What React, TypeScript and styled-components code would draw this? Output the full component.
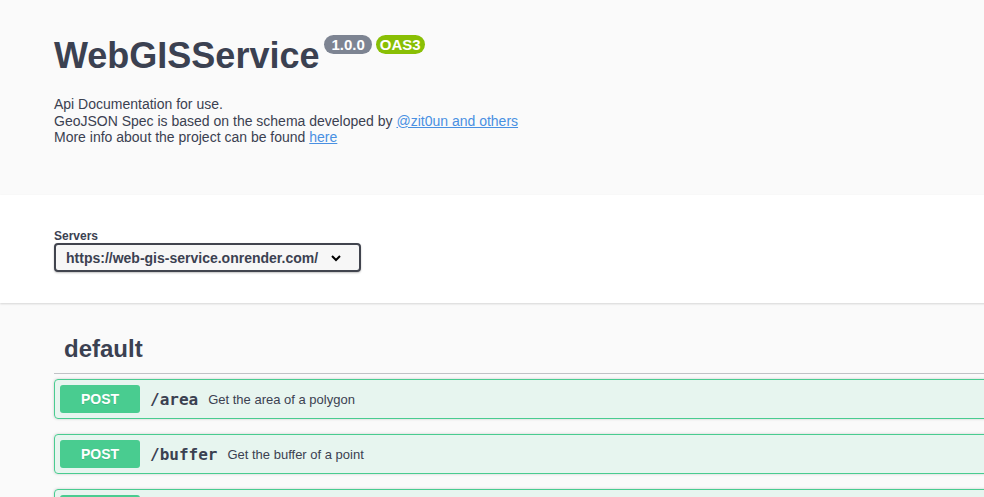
import React from "react";
import styled, { createGlobalStyle } from "styled-components";

const Global = createGlobalStyle`
  html, body { margin: 0; padding: 0; background: #fafafa; overflow: hidden; }
  body { font-family: "Liberation Sans", Arial, sans-serif; color: #3b4151; }
`;

const Page = styled.div`
  width: 1200px;
  min-height: 497px;
  background: #fafafa;
`;

const InfoSection = styled.section`
  background: #fafafa;
  padding: 35px 0 0 54px;
  height: 195px;
  box-sizing: border-box;
`;

const TitleRow = styled.div`
  display: flex;
  align-items: flex-start;
  gap: 4px;
`;

const Title = styled.h2`
  margin: 0;
  font-size: 36px;
  font-weight: 700;
  color: #3b4151;
  line-height: 41px;
  margin-right: 1px;
`;

const Badge = styled.span<{ $bg: string; $px: number }>`
  display: inline-block;
  background: ${(p) => p.$bg};
  color: #fff;
  font-size: 15px;
  font-weight: 700;
  line-height: 17px;
  padding: 1px ${(p) => p.$px}px;
  border-radius: 57px;
`;

const Description = styled.div`
  margin-top: 20px;
  font-size: 14px;
  line-height: 16.5px;
  color: #3b4151;
  p { margin: 0; }
`;

const Link = styled.a`
  color: #4990e2;
  text-decoration: underline;
`;

const SchemeContainer = styled.section`
  background: #fff;
  height: 108px;
  box-sizing: border-box;
  padding: 34px 0 0 54px;
  box-shadow: 0 1px 2px 0 rgba(0, 0, 0, 0.15);
  position: relative;
`;

const Label = styled.div`
  font-size: 12px;
  font-weight: 700;
  color: #3b4151;
  line-height: 14px;
  margin-bottom: 0;
`;

const Select = styled.div`
  display: inline-flex;
  align-items: center;
  height: 29px;
  box-sizing: border-box;
  width: 307px;
  border: 2px solid #41444e;
  border-radius: 4px;
  background: #f7f7f7;
  box-shadow: 0 1px 2px 0 rgba(0, 0, 0, 0.25);
  padding: 0 0 0 10px;
  font-size: 14px;
  font-weight: 700;
  color: #3b4151;
  justify-content: space-between;
`;

const Chevron = styled.svg`
  width: 20px;
  height: 20px;
  margin-right: 13px;
`;

const TagSection = styled.section`
  padding: 26px 0 0 54px;
`;

const TagHeader = styled.h3`
  margin: 0;
  padding: 6px 20px 10px 10px;
  font-size: 24px;
  font-weight: 700;
  line-height: 28px;
  color: #3b4151;
  border-bottom: 1px solid rgba(59, 65, 81, 0.3);
`;

const OpList = styled.div`
  padding-top: 5px;
  display: flex;
  flex-direction: column;
  gap: 15px;
`;

const OpBlock = styled.div`
  display: flex;
  align-items: center;
  height: 40px;
  box-sizing: border-box;
  border: 1px solid #49cc90;
  background: rgba(73, 204, 144, 0.1);
  border-radius: 4px;
  box-shadow: 0 0 3px rgba(0, 0, 0, 0.19);
  padding: 0 5px;
`;

const Method = styled.span`
  display: inline-flex;
  align-items: center;
  justify-content: center;
  width: 80px;
  height: 28px;
  background: #49cc90;
  color: #fff;
  border-radius: 3px;
  font-size: 14px;
  font-weight: 700;
  text-shadow: 0 1px 0 rgba(0, 0, 0, 0.1);
`;

const Path = styled.span`
  font-family: "DejaVu Sans Mono", monospace;
  font-size: 16px;
  font-weight: 700;
  color: #3b4151;
  padding: 0 10px;
`;

const Summary = styled.span`
  font-size: 13px;
  color: #3b4151;
`;

const ops = [
  { path: "/area", summary: "Get the area of a polygon" },
  { path: "/buffer", summary: "Get the buffer of a point" },
  { path: "/centroid", summary: "Get the centroid of a polygon" },
];

export default function App() {
  return (
    <Page>
      <Global />
      <InfoSection>
        <TitleRow>
          <Title>WebGISService</Title>
          <Badge $bg="#7d8492" $px={7}>1.0.0</Badge>
          <Badge $bg="#89bf04" $px={4}>OAS3</Badge>
        </TitleRow>
        <Description>
          <p>Api Documentation for use.</p>
          <p>
            GeoJSON Spec is based on the schema developed by{" "}
            <Link href="#">@zit0un and others</Link>
          </p>
          <p>
            More info about the project can be found <Link href="#">here</Link>
          </p>
        </Description>
      </InfoSection>
      <SchemeContainer>
        <Label>Servers</Label>
        <Select>
          <span>https://web-gis-service.onrender.com/</span>
          <Chevron viewBox="0 0 20 20">
            <path d="M6 8l4 4 4-4" fill="none" stroke="#000" strokeWidth="2" />
          </Chevron>
        </Select>
      </SchemeContainer>
      <TagSection>
        <TagHeader>default</TagHeader>
        <OpList>
          {ops.map((o) => (
            <OpBlock key={o.path}>
              <Method>POST</Method>
              <Path>{o.path}</Path>
              <Summary>{o.summary}</Summary>
            </OpBlock>
          ))}
        </OpList>
      </TagSection>
    </Page>
  );
}
